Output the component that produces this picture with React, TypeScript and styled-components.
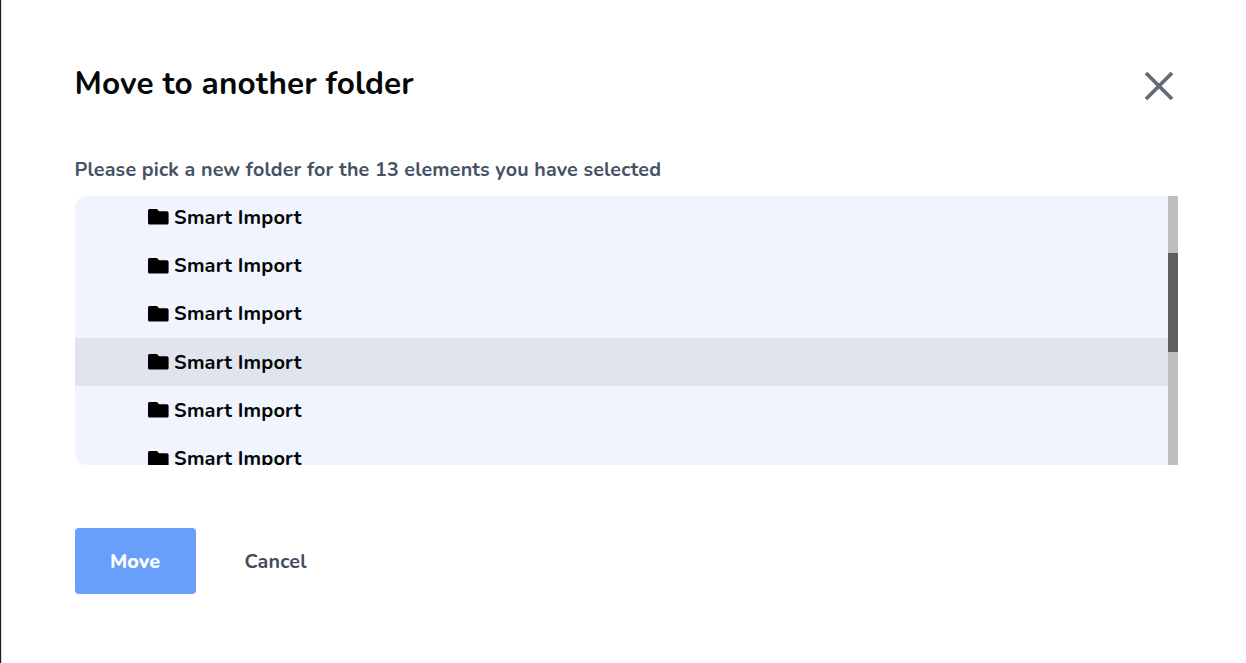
import React from 'react';
import styled, { createGlobalStyle } from 'styled-components';

const GlobalStyle = createGlobalStyle`
  * {
    box-sizing: border-box;
  }

  body {
    margin: 0;
    background: #ffffff;
    font-family: Nunito, 'Open Sans', 'Noto Sans', sans-serif;
  }
`;

const Modal = styled.div`
  width: 100vw;
  height: 100vh;
  overflow: hidden;
  padding: 62px 68px 0 73px;
  background: #ffffff;
  border-left: 1px solid #1d1d20;
  box-shadow: inset 1px 0 0 #dcdcdc;
`;

const Header = styled.div`
  display: flex;
  justify-content: space-between;
  align-items: flex-start;
  height: 94px;
  padding: 0 4px 0 0;
`;

const Title = styled.h1`
  margin: 1px 0 0 0.5px;
  font-size: 31.5px;
  line-height: 42px;
  font-weight: 700;
  letter-spacing: 0.17px;
  white-space: nowrap;
  color: #060708;
`;

const CloseButton = styled.button`
  display: flex;
  margin-top: 9px;
  padding: 0;
  border: none;
  background: none;
  cursor: pointer;
`;

const Label = styled.p`
  margin: 0 0 12px 0.5px;
  font-size: 19.7px;
  line-height: 28px;
  font-weight: 700;
  letter-spacing: 0.165px;
  white-space: nowrap;
  color: #465264;
`;

const Picker = styled.div`
  display: flex;
  width: 1103.4px;
  height: 269px;
  margin-left: 1px;
  border-radius: 12px 0 0 12px;
  overflow: hidden;
  background: #f0f4ff;
`;

const FolderList = styled.ul`
  flex: 1;
  display: flex;
  flex-direction: column;
  margin: -2.7px 0 0;
  padding: 0;
  list-style: none;
`;

const FolderRow = styled.li<{ $active?: boolean }>`
  flex: none;
  display: flex;
  align-items: center;
  gap: 5.5px;
  height: 48.25px;
  padding-left: 72.6px;
  font-size: 20px;
  font-weight: 700;
  letter-spacing: 0.17px;
  color: #050505;
  background: ${props => (props.$active ? '#e0e4ef' : 'transparent')};
  cursor: pointer;
`;

const Track = styled.div`
  flex: none;
  width: 10px;
  padding-top: 57px;
  background: #bebebe;
`;

const Thumb = styled.div`
  height: 99px;
  background: #5e5e5e;
`;

const Footer = styled.div`
  display: flex;
  gap: 13px;
  margin: 63px 0 0 1px;
`;

const Button = styled.button<{ $primary?: boolean }>`
  width: ${props => (props.$primary ? '121px' : '134px')};
  height: 66px;
  padding: 1px 1px 0 0;
  border: none;
  border-radius: 4px;
  font-family: inherit;
  font-size: 19.7px;
  font-weight: ${props => (props.$primary ? 800 : 700)};
  letter-spacing: 0.13px;
  color: ${props => (props.$primary ? '#ffffff' : '#414d5f')};
  background: ${props => (props.$primary ? '#699ffb' : 'transparent')};
  cursor: pointer;
`;

const FolderIcon = () => (
  <svg width="21" height="16" viewBox="0 0 21 16" fill="#000000">
    <path d="M1.5 0H8.2C8.7 0 9 .1 9.4 .5L11.2 2.3H18.9A1.7 1.7 0 0 1 20.6 4V13.9A1.7 1.7 0 0 1 18.9 15.6H1.7A1.7 1.7 0 0 1 0 13.9V1.5A1.5 1.5 0 0 1 1.5 0Z" />
  </svg>
);

const CloseIcon = () => (
  <svg width="30" height="30" viewBox="0 0 30 30" fill="none" stroke="#5f6b7b" strokeWidth="3.8">
    <path d="M2 2L28 28M28 2L2 28" />
  </svg>
);

const folders = [
  { id: 1, name: 'Smart Import' },
  { id: 2, name: 'Smart Import' },
  { id: 3, name: 'Smart Import' },
  { id: 4, name: 'Smart Import' },
  { id: 5, name: 'Smart Import' },
  { id: 6, name: 'Smart Import' },
];

const App: React.FC = () => {
  const [selected, setSelected] = React.useState(4);

  return (
    <>
      <GlobalStyle />
      <Modal>
        <Header>
          <Title>Move to another folder</Title>
          <CloseButton aria-label="Close">
            <CloseIcon />
          </CloseButton>
        </Header>

        <Label>Please pick a new folder for the 13 elements you have selected</Label>

        <Picker>
          <FolderList>
            {folders.map(folder => (
              <FolderRow
                key={folder.id}
                $active={folder.id === selected}
                onClick={() => setSelected(folder.id)}>
                <FolderIcon />
                <span>{folder.name}</span>
              </FolderRow>
            ))}
          </FolderList>
          <Track>
            <Thumb />
          </Track>
        </Picker>

        <Footer>
          <Button $primary>Move</Button>
          <Button>Cancel</Button>
        </Footer>
      </Modal>
    </>
  );
};

export default App;
